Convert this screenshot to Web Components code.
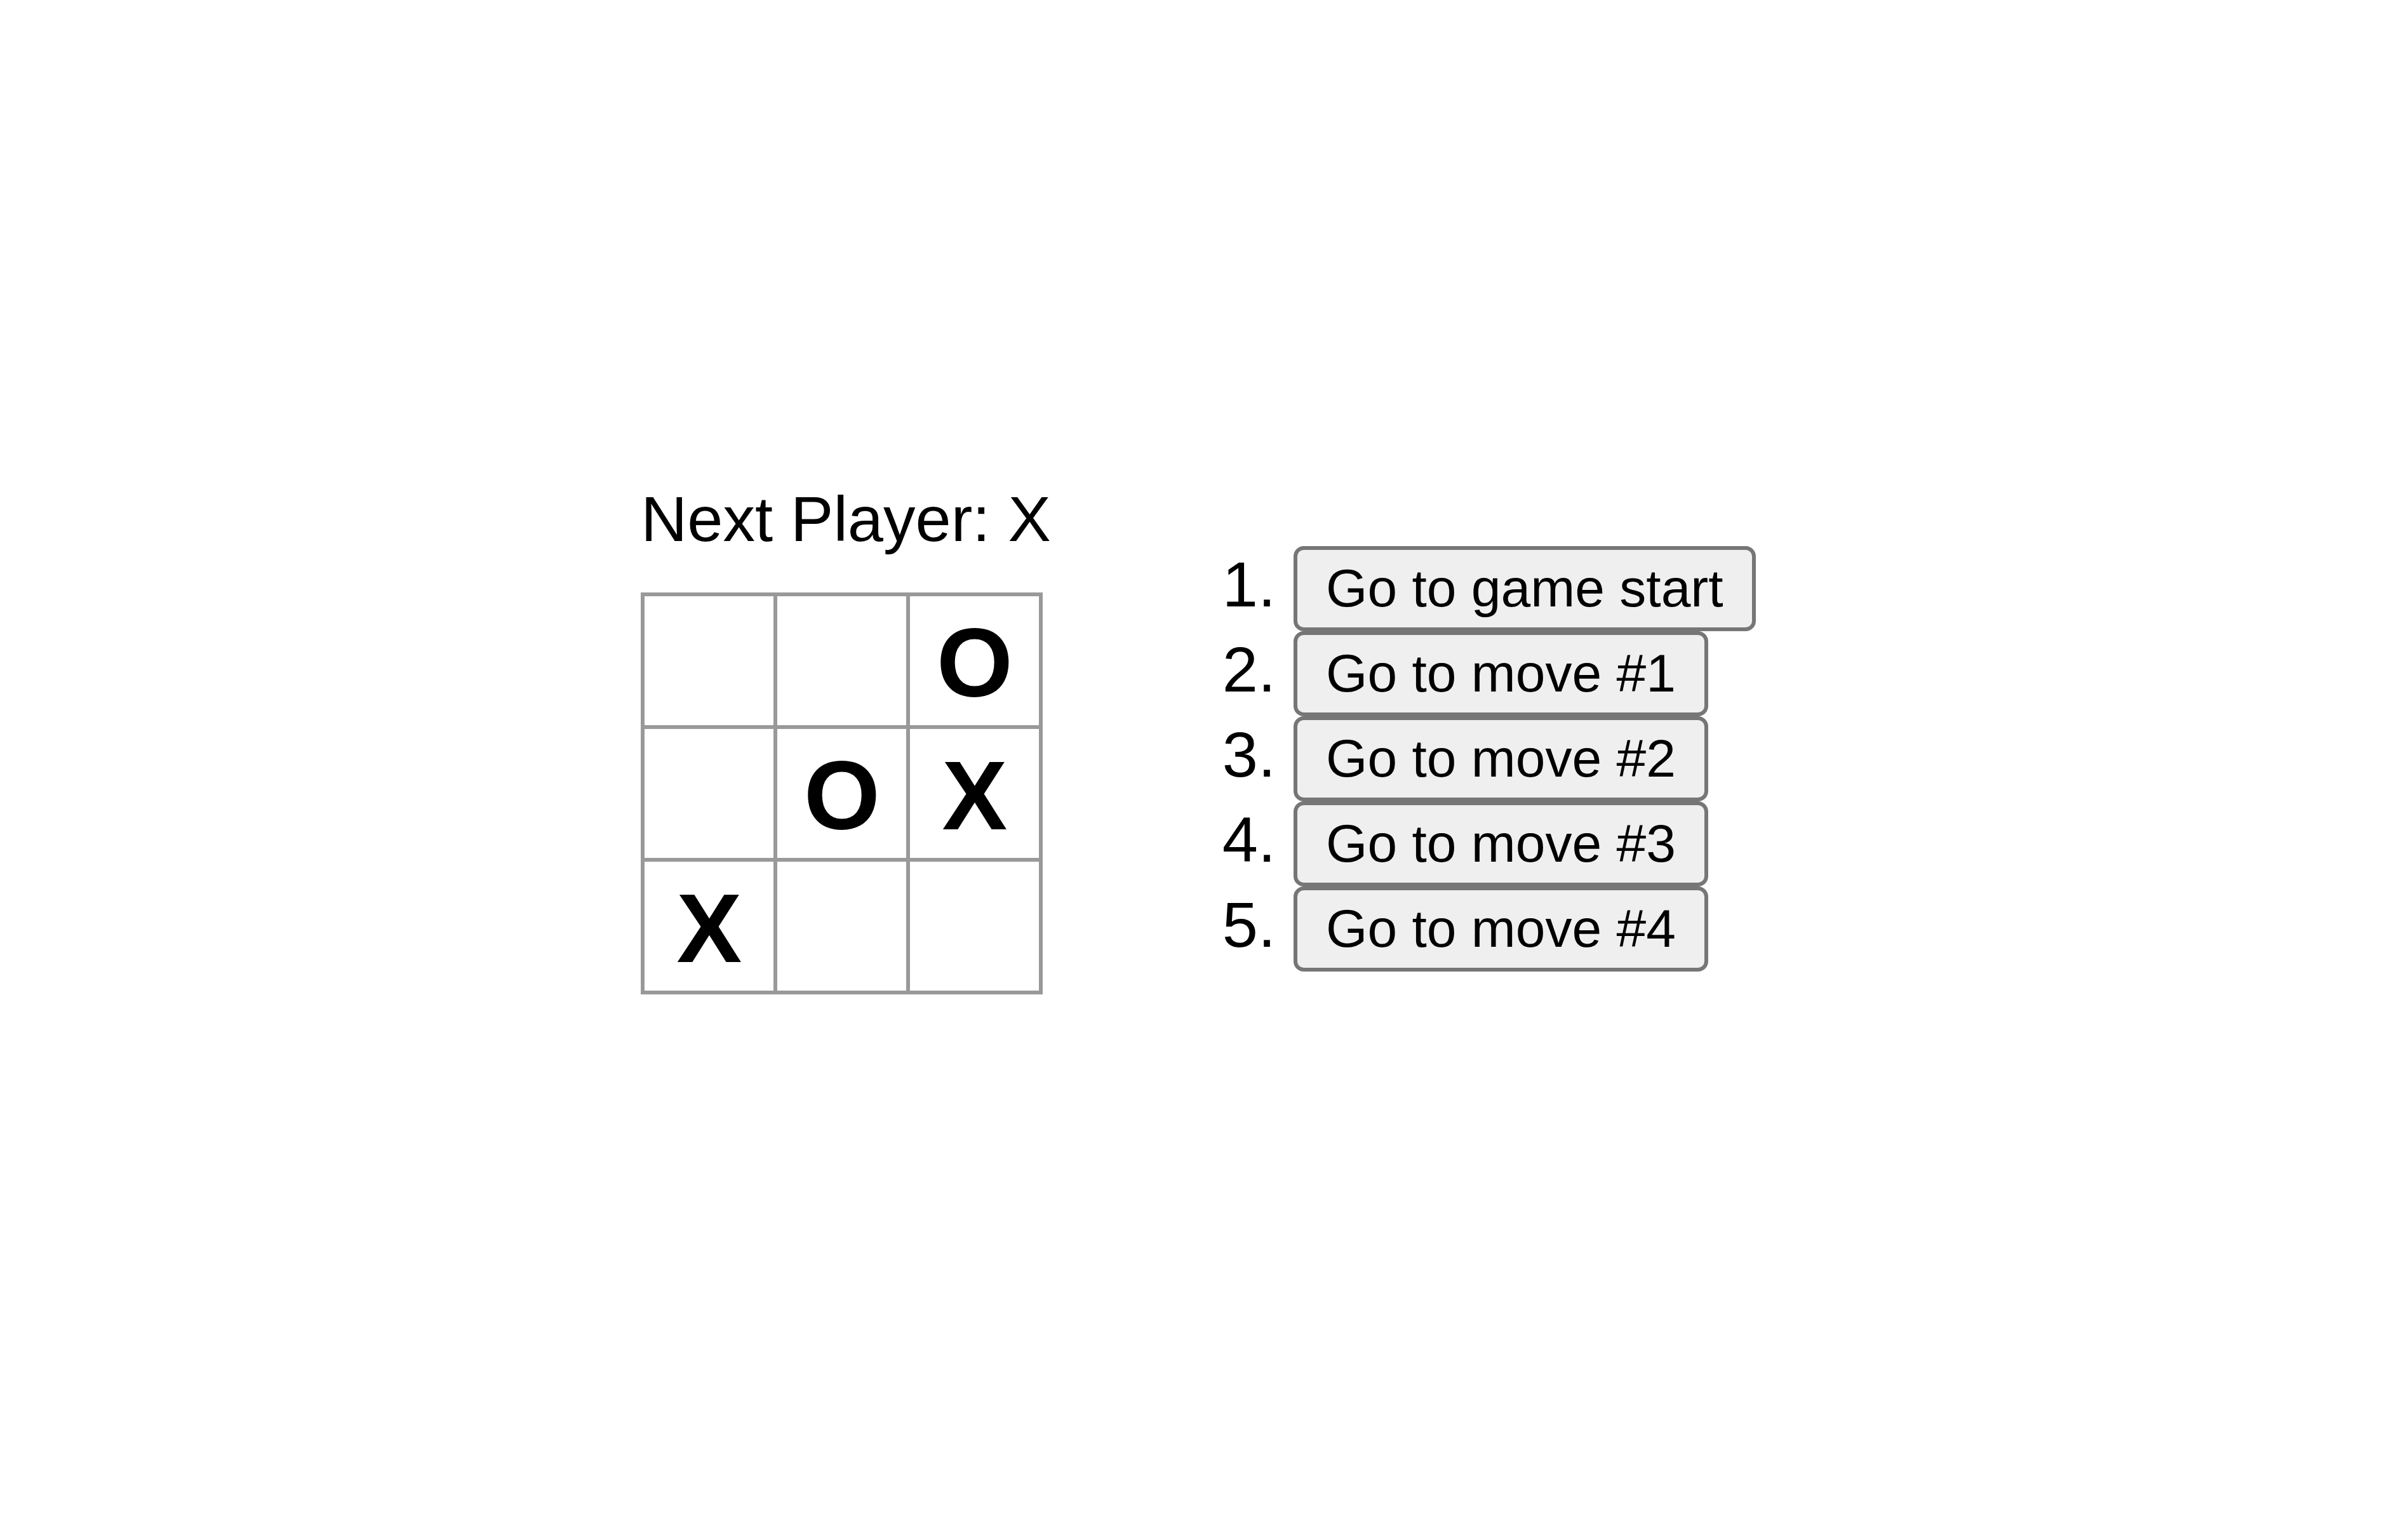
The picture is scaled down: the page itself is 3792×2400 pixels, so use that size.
<!DOCTYPE html>
<html lang="en">
<head>
<meta charset="utf-8">
<title>Tic Tac Toe</title>
<style>
  body { margin: 0; background: #fff; color: #000; font-family: "Liberation Sans", Arial, sans-serif; }
</style>
</head>
<body>
<tic-tac-toe></tic-tac-toe>

<template id="game-template">
  <style>
    :host { display: flex; box-sizing: border-box; min-height: 100vh; justify-content: center; align-items: center; padding: 0 18px 78px 0; font-size: 101px; }
    main { display: flex; align-items: flex-start; gap: 270px; }
    section { display: flex; flex-direction: column; gap: 56px; }
    h1 { margin: 0; font-size: inherit; font-weight: normal; line-height: 120px; white-space: nowrap; }
    move-list { margin-top: 103px; }
  </style>
  <main>
    <section>
      <h1>Next Player: X</h1>
      <game-board cells="--O-OXX--"></game-board>
    </section>
    <move-list moves="4"></move-list>
  </main>
</template>

<template id="board-template">
  <style>
    :host { display: grid; grid-template-columns: repeat(3, 209px); grid-auto-rows: 209px; padding: 0 6px 6px 0; }
    board-square { margin: 0 -6px -6px 0; }
  </style>
</template>

<template id="square-template">
  <style>
    :host { display: grid; }
    button { margin: 0; padding: 8px 0 0; border: 6px solid #999; border-radius: 0; background: #fff; color: #000; font: bold 154px "Liberation Sans", Arial, sans-serif; line-height: 180px; text-align: center; overflow: hidden; }
  </style>
  <button type="button"><slot></slot></button>
</template>

<template id="list-template">
  <style>
    :host { display: block; }
    ol { display: flex; flex-direction: column; margin: 0; padding: 0; list-style: none; }
    li { display: flex; align-items: baseline; gap: 28px; line-height: 112px; }
  </style>
  <ol></ol>
</template>

<template id="move-template">
  <style>
    :host { display: block; }
    button { display: block; height: 134px; margin: 0; padding: 0 45px; border: 6px solid #767676; border-radius: 16px; background: #efefef; color: #000; font: 84px "Liberation Sans", Arial, sans-serif; white-space: nowrap; }
  </style>
  <button type="button"><slot></slot></button>
</template>

<script>
  class TemplateElement extends HTMLElement {
    constructor() {
      super();
      const template = document.getElementById(this.constructor.template);
      this.attachShadow({ mode: "open" }).append(template.content.cloneNode(true));
    }
  }

  class BoardSquare extends TemplateElement {
    static template = "square-template";
    connectedCallback() {
      this.shadowRoot.querySelector("button").setAttribute("aria-label", this.getAttribute("label"));
    }
  }

  class MoveButton extends TemplateElement {
    static template = "move-template";
  }

  class GameBoard extends TemplateElement {
    static template = "board-template";
    connectedCallback() {
      [...this.getAttribute("cells")].forEach((mark, i) => {
        const square = document.createElement("board-square");
        const value = mark === "-" ? "" : mark;
        square.setAttribute("label", value || "Square " + (i + 1));
        square.textContent = value;
        this.shadowRoot.append(square);
      });
    }
  }

  class MoveList extends TemplateElement {
    static template = "list-template";
    connectedCallback() {
      const list = this.shadowRoot.querySelector("ol");
      for (let move = 0; move <= Number(this.getAttribute("moves")); move++) {
        const item = document.createElement("li");
        const number = document.createElement("span");
        number.textContent = (move + 1) + ".";
        const button = document.createElement("move-button");
        button.textContent = move ? "Go to move #" + move : "Go to game start";
        item.append(number, button);
        list.append(item);
      }
    }
  }

  class TicTacToe extends TemplateElement {
    static template = "game-template";
  }

  customElements.define("board-square", BoardSquare);
  customElements.define("move-button", MoveButton);
  customElements.define("game-board", GameBoard);
  customElements.define("move-list", MoveList);
  customElements.define("tic-tac-toe", TicTacToe);
</script>
</body>
</html>
